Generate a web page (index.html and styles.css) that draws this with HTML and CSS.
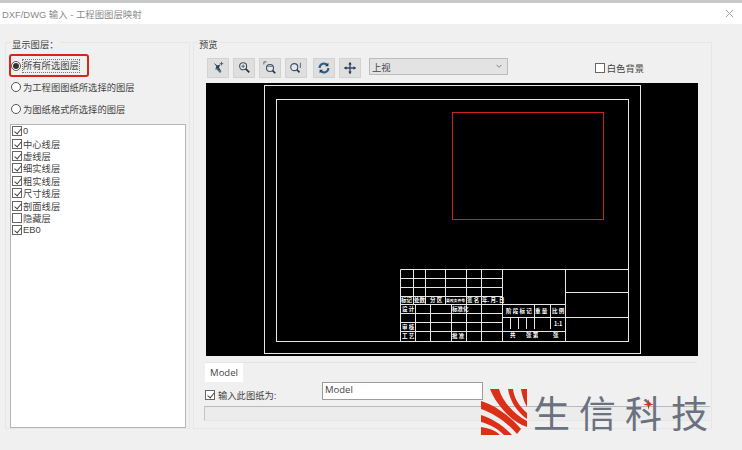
FILE: index.html
```html
<!DOCTYPE html>
<html lang="zh">
<head>
<meta charset="utf-8">
<title>DXF/DWG 输入</title>
<link rel="stylesheet" href="styles.css">
</head>
<body>
<div class="window">
  <header class="titlebar">
    <span class="title">DXF/DWG 输入 - 工程图图层映射</span>
    <svg class="close" viewBox="0 0 10 10"><path d="M1 1L9 9M9 1L1 9"/></svg>
  </header>
  <main class="content">
    <section class="group left">
      <h2 class="legend">显示图层：</h2>
      <div class="radio-highlight">
        <label class="radio first"><span class="dot on"></span><span class="focus">所有所选图层</span></label>
      </div>
      <label class="radio"><span class="dot"></span>为工程图图纸所选择的图层</label>
      <label class="radio"><span class="dot"></span>为图纸格式所选择的图层</label>
      <ul class="layers">
        <li><span class="check on"></span>0</li>
        <li><span class="check on"></span>中心线层</li>
        <li><span class="check on"></span>虚线层</li>
        <li><span class="check on"></span>细实线层</li>
        <li><span class="check on"></span>粗实线层</li>
        <li><span class="check on"></span>尺寸线层</li>
        <li><span class="check on"></span>剖面线层</li>
        <li><span class="check"></span>隐藏层</li>
        <li><span class="check on"></span>EB0</li>
      </ul>
    </section>
    <section class="group right">
      <h2 class="legend">预览</h2>
      <div class="toolbar">
        <button class="tool"><svg viewBox="0 0 16 16"><path class="ink" d="M3 2l4 3 4-1-2 3 3 5-5-3-2 1 1-4z"/><path class="blue" d="M6 8l5 5"/><path class="thin" d="M12 1v4M10 3h4"/></svg></button>
        <button class="tool"><svg viewBox="0 0 16 16"><circle class="lens" cx="7" cy="6" r="4"/><path class="handle" d="M10 9l4 4"/><path class="thin" d="M5 6h4M7 4v4"/></svg></button>
        <button class="tool"><svg viewBox="0 0 16 16"><circle class="lens" cx="8" cy="8" r="4"/><path class="handle" d="M11 11l3 3"/><path class="thin" d="M1 4V1h3M5 6h6"/></svg></button>
        <button class="tool"><svg viewBox="0 0 16 16"><circle class="lens" cx="6" cy="7" r="4"/><path class="handle" d="M9 10l3 3"/><path class="thin" d="M13 2v6"/></svg></button>
        <button class="tool gap"><svg viewBox="0 0 16 16"><path class="refresh" d="M3 8a5 5 0 0 1 9-3M13 8a5 5 0 0 1-9 3"/><path class="ink" d="M13 2v4h-4zM3 14v-4h4z"/></svg></button>
        <button class="tool"><svg viewBox="0 0 16 16"><path class="move" d="M8 2v12M2 8h12"/><path class="ink" d="M8 1l2 3H6zM8 15l2-3H6zM1 8l3-2v4zM15 8l-3-2v4z"/></svg></button>
        <div class="select"><span>上视</span><svg viewBox="0 0 10 6"><path d="M2 1l3 3 3-3"/></svg></div>
        <label class="white-bg"><span class="check"></span>白色背景</label>
      </div>
      <div class="canvas">
        <svg class="drawing" viewBox="206 83 492 273">
          <g class="sheet">
            <rect x="264.5" y="85.5" width="376" height="268"/>
            <rect x="276.5" y="99.5" width="352" height="242"/>
            <path d="M400.5 269.5H628M400.5 278.5H502M400.5 287.5H502M400.5 296.5H502M400.5 304.5H565M400.5 313.5H502M400.5 322.5H502M400.5 331.5H565M502 317.5H628M565 292.5H628M400.5 269.5V341M413.5 269.5V304M425.5 269.5V304M445.5 269.5V304M466.5 269.5V341M481.5 269.5V341M502.5 269.5V341M565.5 269.5V341M415.5 304V341M430.5 304V341M451.5 304V341M510.5 317V329M518.5 317V329M526.5 317V329M534.5 304V329M550.5 304V329"/>
          </g>
          <rect class="red" x="452.5" y="112.5" width="151" height="107"/>
          <g class="tb">
            <text x="401" y="302">标记</text><text x="414" y="302">处数</text><text x="430" y="302">分 区</text>
            <text x="446" y="302" class="tiny">更改文件号</text><text x="467" y="302">签 名</text><text x="482" y="302">年. 月. 日</text>
            <text x="402" y="311">设 计</text><text x="452" y="311">标准化</text>
            <text x="402" y="329">审 核</text><text x="402" y="338">工 艺</text><text x="452" y="338">批 准</text>
            <text x="506" y="313">阶 段 标 记</text><text x="535" y="313">重 量</text><text x="552" y="313">比 例</text>
            <text x="554" y="326">1:1</text><text x="510" y="337">共</text><text x="526" y="337">张 第</text><text x="553" y="337">张</text>
          </g>
        </svg>
      </div>
      <div class="tabstrip"><span class="tab">Model</span></div>
      <div class="import-row">
        <label class="import"><span class="check on"></span>输入此图纸为:</label>
        <div class="input">Model</div>
      </div>
      <div class="status"></div>
    </section>
  </main>
  <div class="logo">
    <svg class="mark" viewBox="0 0 46 46">
      <path d="M40 0H46V18C43 13 41 6 40 0Z"/>
      <path d="M27 0H32C33 9 38 17 46 24V30C36 23 29 12 27 0Z"/>
      <path d="M9 0H18C21 12 33 25 46 32V38C30 33 15 15 9 0Z"/>
      <path d="M0 12C14 16 30 28 40 40L36 45C26 33 12 24 0 20Z"/>
      <path d="M0 26C10 29 22 36 31 46H23C16 39 8 35 0 33Z"/>
      <path d="M0 38C7 39 14 41 19 46H0Z"/>
    </svg>
    <span class="brand">生信科技</span>
    <svg class="spark" viewBox="0 0 12 12"><path d="M6 0L7 5L12 6L7 7L6 12L5 7L0 6L5 5Z"/></svg>
  </div>
</div>
</body>
</html>
```
FILE: styles.css
```css
* { box-sizing: border-box; }
html, body { margin: 0; padding: 0; }
body {
  width: 742px; height: 450px; overflow: hidden;
  font-family: "Liberation Sans", "Noto Sans CJK SC", sans-serif;
  font-size: 9.3px; color: #444; background: #f0f0f0;
}
.window { position: relative; width: 742px; height: 450px; }
.titlebar {
  height: 24px; border-top: 3px solid #c8c8c8; background: #fff;
  display: flex; align-items: center; justify-content: space-between;
  padding: 0 5px 0 2px;
}
.title { font-size: 9.4px; color: #8a8a8a; }
.close { width: 9px; height: 9px; margin-right: 3px; }
.close path { stroke: #9a9a9a; stroke-width: 1; fill: none; }
.content { display: flex; padding: 18px 30px 0 5px; gap: 3px; height: 405px; }
.group { border: 1px solid #e6e6e6; position: relative; }
.legend {
  position: absolute; top: -6px; left: 5px; margin: 0; padding: 0 1px;
  font-size: 9.3px; font-weight: normal; background: #f0f0f0; color: #444;
}
.left { width: 185px; padding: 11px 3px 0 4px; display: flex; flex-direction: column; }
.right .legend { left: 4px; }
.radio-highlight {
  width: 80px; height: 23px; margin-left: -1px; flex: none;
  border: 2px solid #d9241c; border-radius: 3px;
  display: flex; align-items: center;
}
.radio { display: flex; align-items: center; gap: 2px; height: 22px; flex: none; white-space: nowrap; }
.radio > .dot { margin-left: 1px; }
.radio.first { height: auto; gap: 1px; }
.radio.first > .dot { margin-left: 0; }
.radio-highlight + .radio { margin-top: -1px; }
.focus { border: 1px dotted #777; line-height: 12px; }
.dot {
  width: 10px; height: 10px; border-radius: 50%; border: 1px solid #555;
  background: #fff; flex: none; position: relative;
}
.dot.on::after {
  content: ""; position: absolute; left: 1px; top: 1px;
  width: 6px; height: 6px; border-radius: 50%; background: #333;
}
.layers {
  list-style: none; margin: 4px 0 0 0; padding: 0 0 0 1px; width: 176px; height: 304px; flex: none;
  background: #fff; border: 1px solid #b5b5b5;
}
.layers li { display: flex; align-items: center; height: 12.4px; gap: 1px; }
.check {
  width: 10px; height: 10px; border: 1px solid #666; background: #fff; flex: none; position: relative; display: inline-block;
}
.check.on::after {
  content: ""; position: absolute; left: 2.5px; top: 0; width: 3px; height: 6px;
  border: solid #444; border-width: 0 1px 1px 0; transform: rotate(40deg);
}
.right { width: 519px; padding: 15px 14px 0 12px; }
.toolbar { display: flex; align-items: center; height: 20px; gap: 4px; padding-left: 1px; }
.tool {
  width: 22px; height: 20px; padding: 2px 3px; margin: 0;
  background: #dfdfdf; border: 1px solid #d2d2d2; display: flex; align-items: center; justify-content: center;
}
.tool.gap { margin-left: 2px; }
.tool svg { width: 14px; height: 14px; }
.ink { fill: #2c3a4c; }
.blue { stroke: #3c6e9a; stroke-width: 2; fill: none; }
.lens { fill: #dfe9ef; stroke: #405060; stroke-width: 1.3; }
.handle { stroke: #333; stroke-width: 2; fill: none; }
.thin { stroke: #555; stroke-width: 1; fill: none; }
.refresh { stroke: #2f5f86; stroke-width: 2.4; fill: none; }
.move { stroke: #2c4c70; stroke-width: 1.6; fill: none; }
.select {
  width: 139px; height: 17px; margin-left: 4px; margin-top: -3px; padding: 0 4px 0 2px;
  background: #e3e3e3; border: 1px solid #bcbcbc; display: flex; align-items: center; justify-content: space-between;
}
.select svg { width: 8px; height: 5px; }
.select path { stroke: #666; fill: none; }
.white-bg { display: flex; align-items: center; gap: 2px; margin-left: auto; margin-right: 53px; }
.canvas { height: 273px; margin-top: 5px; background: #000; width: 492px; }
.drawing { display: block; width: 492px; height: 273px; }
.sheet rect, .sheet path { fill: none; stroke: #e6e6e6; stroke-width: 1; }
.red { fill: none; stroke: #d0201c; stroke-width: 1; }
.tb text { fill: #fff; font-size: 5.5px; font-weight: bold; font-family: "Noto Sans CJK SC", sans-serif; }
.tb text.tiny { font-size: 3.8px; }
.tabstrip { margin: 6px 0 0 -1px; height: 20px; border-top: 1px solid #e4e4e4; }
.tab {
  display: inline-block; height: 19px; width: 38px; text-align: center; line-height: 19px; background: #fff; vertical-align: top;
  font-family: "Open Sans", sans-serif; font-size: 9.5px; color: #444;
}
.import-row { display: flex; align-items: flex-start; height: 24px; }
.import { display: flex; align-items: center; gap: 3px; width: 117px; margin: 5px 0 0 -1px; height: 16px; }
.input {
  width: 161px; height: 18px; background: #fff; border: 1px solid #9c9c9c; padding-left: 2px;
  font-family: "Open Sans", sans-serif; font-size: 9.5px; line-height: 14px; color: #444;
}
.status { height: 15px; width: 506px; margin-left: -2px; border-top: 1px solid #b9b9b9; border-left: 1px solid #c4c4c4; border-bottom: 1px solid #e6e6e6; background: #ececec; }
.logo { position: absolute; left: 481px; top: 389px; display: flex; align-items: center; gap: 6px; height: 46px; }
.mark { width: 46px; height: 46px; overflow: hidden; flex: none; }
.mark path { fill: #dc2f18; }
.brand {
  font-family: "Noto Sans CJK SC", sans-serif; font-size: 37px; line-height: 46px; letter-spacing: 9px;
  color: #6a7280; white-space: nowrap; font-weight: 400;
}
.spark { position: absolute; left: 162px; top: 10px; width: 11px; height: 11px; }
.spark path { fill: #e02a18; }
```
